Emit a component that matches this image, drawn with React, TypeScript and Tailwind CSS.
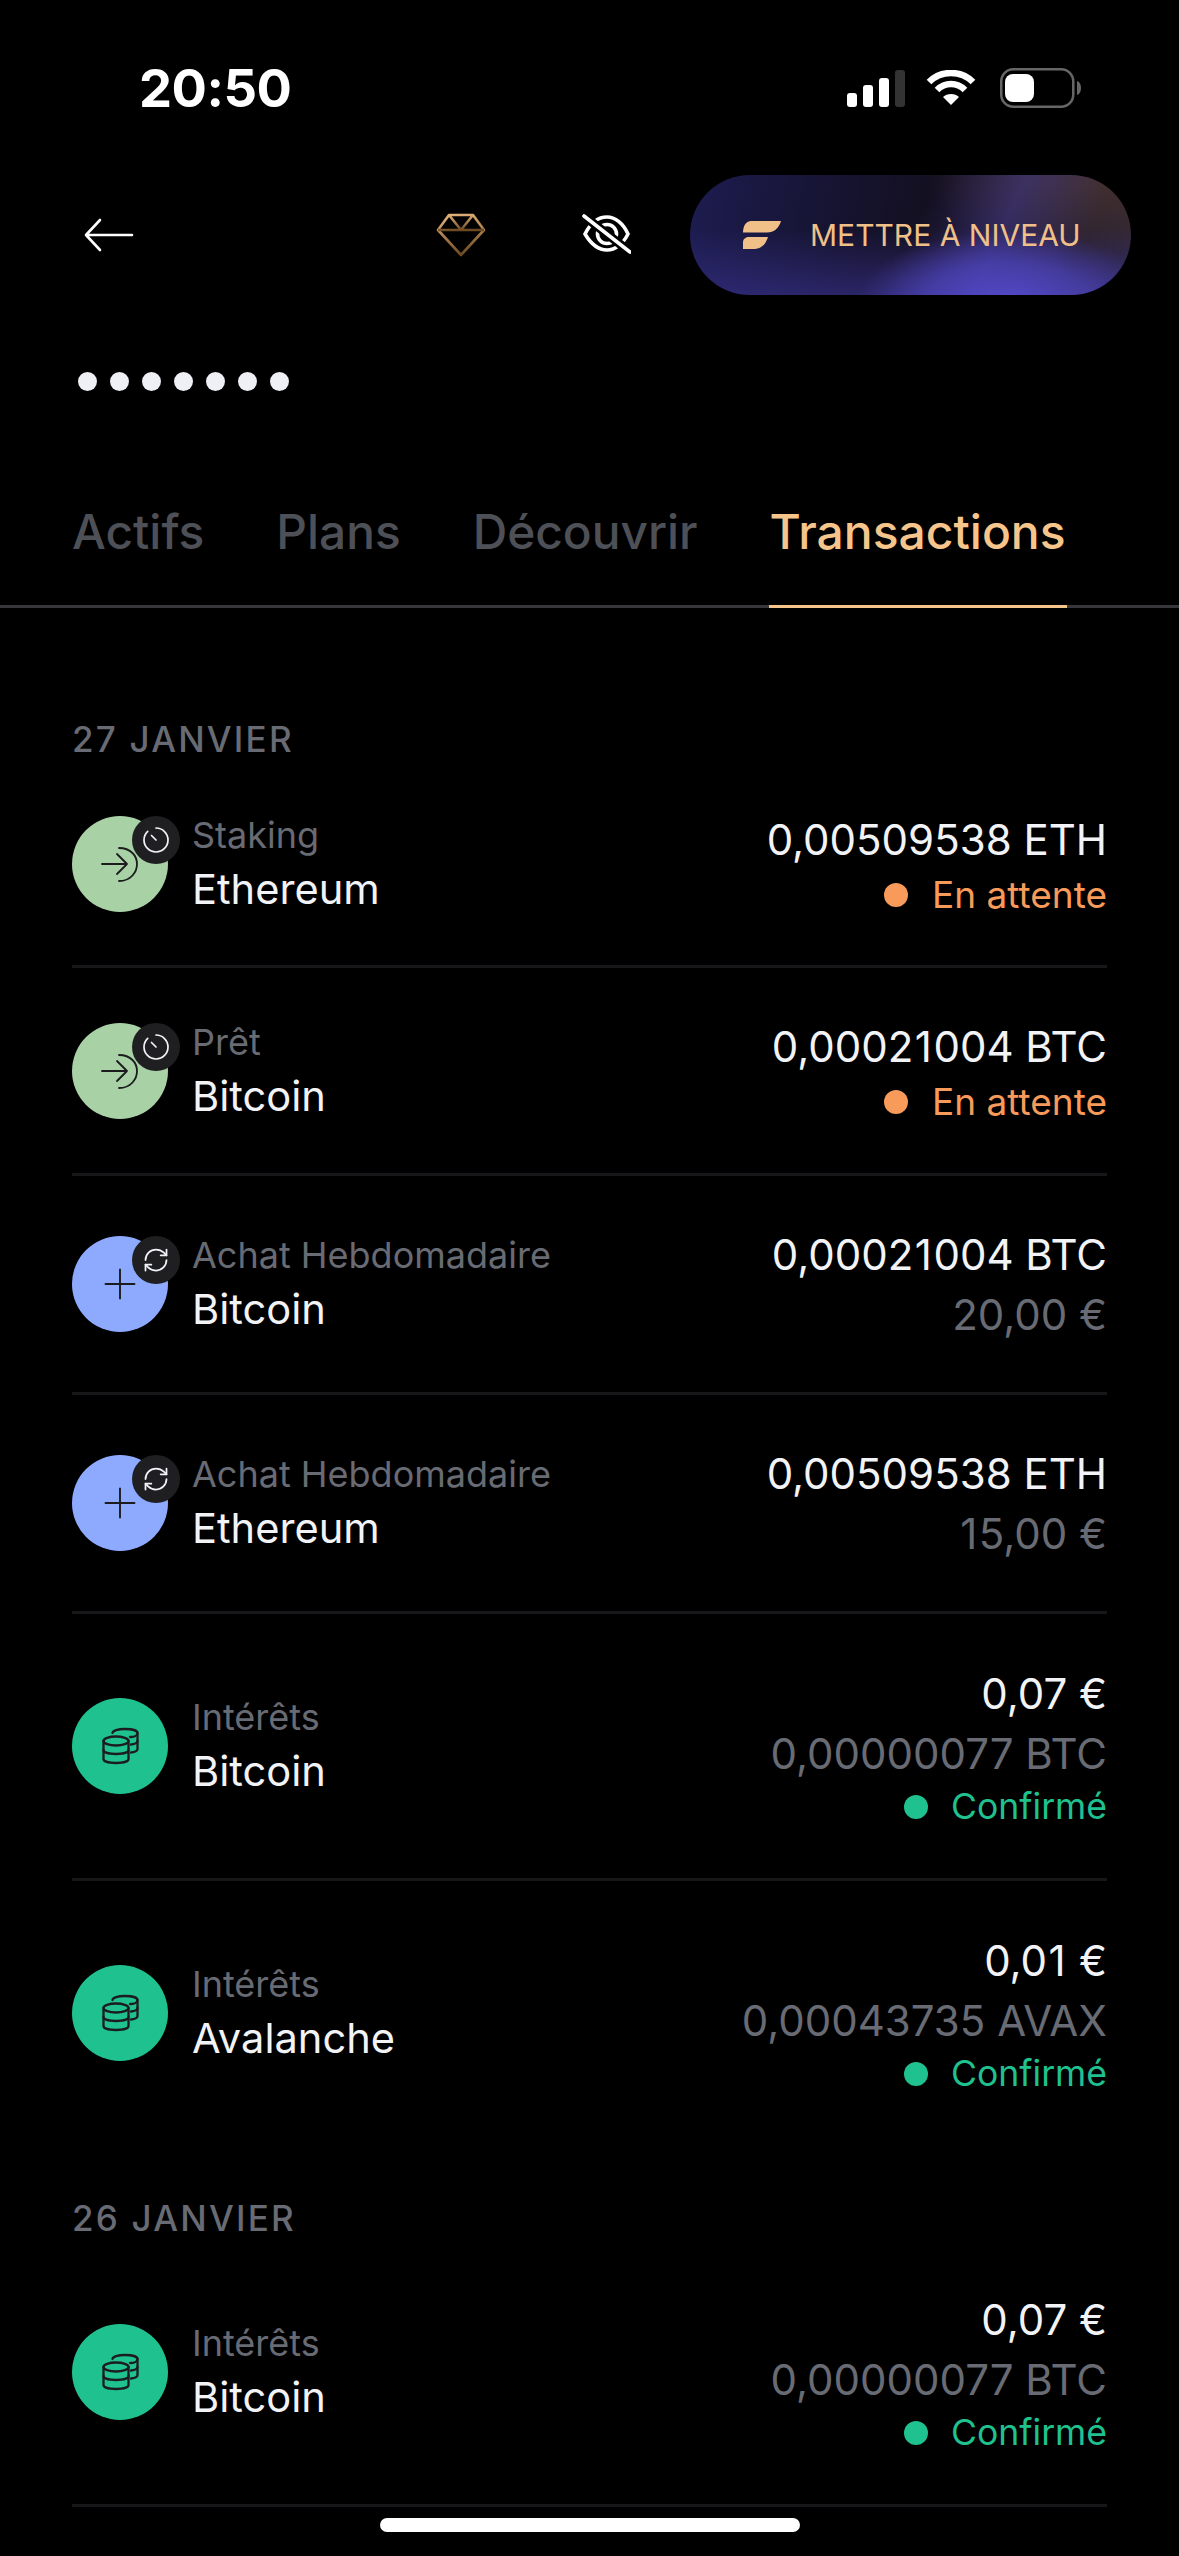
import React from "react";
import { RefreshCw } from "lucide-react";

type Tx = {
  kind: "in" | "plus" | "coin";
  label: string;
  name: string;
  amount: string;
  sub?: string;
  status?: "wait" | "ok";
  rowClass: string;
  noLine?: boolean;
};

const group1: Tx[] = [
  { kind: "in", label: "Staking", name: "Ethereum", amount: "0,00509538 ETH", status: "wait", rowClass: "h-[207px] pt-[2px]" },
  { kind: "in", label: "Prêt", name: "Bitcoin", amount: "0,00021004 BTC", status: "wait", rowClass: "h-[208px]" },
  { kind: "plus", label: "Achat Hebdomadaire", name: "Bitcoin", amount: "0,00021004 BTC", sub: "20,00 €", rowClass: "h-[219px]" },
  { kind: "plus", label: "Achat Hebdomadaire", name: "Ethereum", amount: "0,00509538 ETH", sub: "15,00 €", rowClass: "h-[219px]" },
  { kind: "coin", label: "Intérêts", name: "Bitcoin", amount: "0,07 €", sub: "0,00000077 BTC", status: "ok", rowClass: "h-[267px]" },
  { kind: "coin", label: "Intérêts", name: "Avalanche", amount: "0,01 €", sub: "0,00043735 AVAX", status: "ok", rowClass: "h-[267px] pb-[3px]", noLine: true },
];

// the 1 is wider in the reference than in plain Inter
const Num = ({ text }: { text: string }) => (
  <>
    {text.split(/(1)/).map((p, i) =>
      p === "1" ? (
        <span key={i} className="px-[1.5px]">
          1
        </span>
      ) : (
        p
      )
    )}
  </>
);

const CircleIcon = ({ kind }: { kind: Tx["kind"] }) => {
  const bg = kind === "in" ? "bg-[#a8d1a6]" : kind === "plus" ? "bg-[#8eaaff]" : "bg-[#1fc18f]";
  return (
    <div className={`relative w-[96px] h-[96px] rounded-full shrink-0 ${bg}`}>
      <svg viewBox="0 0 96 96" className="w-[96px] h-[96px]" fill="none" stroke="#1c1c1e" strokeLinecap="round" strokeLinejoin="round">
        {kind === "in" && (
          <g strokeWidth="1.8">
            <path d="M30 48H55M45 38L55 48L45 58" />
            <path d="M47 32C59 32 65 40 65 48C65 56 59 65 47 65" />
          </g>
        )}
        {kind === "plus" && <path d="M33.5 48H62.5M48 33.5V62.5" strokeWidth="1.9" />}
        {kind === "coin" && (
          <g strokeWidth="2.3" transform="translate(30 30)">
            <ellipse cx="14" cy="13" rx="12.5" ry="4.5" />
            <path d="M1.5 13V31C1.5 33.5 7 35 14 35C21 35 26.5 33.5 26.5 31V13" />
            <path d="M1.5 22C1.5 24.5 7 26 14 26C21 26 26.5 24.5 26.5 22" />
            <path d="M10.5 5C10.5 2.5 16 1 23 1C30 1 35.5 2.5 35.5 5C35.5 7.5 32 9 28 9" />
            <path d="M35.5 5V21C35.5 23 33 24 29 24.5" />
            <path d="M35.5 13C35.5 15 33 16 29 16.5" />
          </g>
        )}
      </svg>
      {kind === "in" && (
        <div className="absolute top-0 left-[60px] w-[48px] h-[48px] rounded-full bg-[#1f1f21] flex items-center justify-center">
          <svg viewBox="0 0 48 48" className="w-[48px] h-[48px]" fill="none" stroke="#f2f3f7" strokeWidth="1.7" strokeLinecap="round">
            <path d="M24 12C30.6 12 36 17.4 36 24C36 30.6 30.6 36 24 36C17.4 36 12 30.6 12 24C12 20.6 13.4 17.6 15.7 15.4" />
            <path d="M24 24L19.5 19.5" />
          </svg>
        </div>
      )}
      {kind === "plus" && (
        <div className="absolute top-0 left-[60px] w-[48px] h-[48px] rounded-full bg-[#1f1f21] flex items-center justify-center">
          <RefreshCw size={28} strokeWidth={1.5} color="#f2f3f7" />
        </div>
      )}
    </div>
  );
};

const Row = ({ tx }: { tx: Tx }) => (
  <div className={`flex items-center justify-between ${tx.rowClass} ${tx.noLine ? "" : "border-b-[3px] border-[#17171a]"}`}>
    <div className="flex items-center gap-[24px]">
      <CircleIcon kind={tx.kind} />
      <div className="flex flex-col pb-[4px]">
        <p className="text-[36px] leading-[54px] text-[#686b73]">{tx.label}</p>
        <p className="text-[41.6px] leading-[54px] text-[#f2f3f7]">{tx.name}</p>
      </div>
    </div>
    <div className="flex flex-col items-end pt-[2px]">
      <p className="text-[42px] leading-[60px] text-[#f2f3f7]">
        <Num text={tx.amount} />
      </p>
      {tx.sub && (
        <p className="text-[42px] leading-[60px] text-[#686b73]">
          <Num text={tx.sub} />
        </p>
      )}
      {tx.status === "wait" && (
        <div className="flex items-center gap-[24px] h-[50px]">
          <span className="w-[24px] h-[24px] rounded-full bg-[#f79a5a]" />
          <span className="text-[37px] text-[#f79a5a]">En attente</span>
        </div>
      )}
      {tx.status === "ok" && (
        <div className="flex items-center gap-[23px] h-[46px]">
          <span className="w-[24px] h-[24px] rounded-full bg-[#1fc18f]" />
          <span className="text-[35.6px] text-[#1fc18f]">Confirmé</span>
        </div>
      )}
    </div>
  </div>
);

const StatusIcons = () => (
  <div className="flex items-center gap-[21px]">
    <svg width="58" height="38" viewBox="0 0 58 38">
      <rect x="0" y="24" width="10" height="14" rx="3" fill="#fff" />
      <rect x="16" y="16" width="10" height="22" rx="3" fill="#fff" />
      <rect x="32" y="9" width="10" height="29" rx="3" fill="#fff" />
      <rect x="48" y="1" width="10" height="37" rx="3" fill="#333" />
    </svg>
    <svg width="50" height="36" viewBox="0 0 50 36" fill="none" stroke="#fff" strokeWidth="6.5">
      <path d="M3 12C15 0 35 0 47 12" />
      <path d="M11 20C19 12 31 12 39 20" />
      <path d="M25 35L17 27C21 23 29 23 33 27Z" fill="#fff" stroke="none" />
    </svg>
    <svg width="84" height="40" viewBox="0 0 84 40" fill="none">
      <rect x="4.25" y="1.25" width="72" height="37.5" rx="12" stroke="#666" strokeWidth="2.5" />
      <rect x="8" y="6" width="29" height="28" rx="8" fill="#fff" />
      <path d="M80 13C83 14 84 17 84 20C84 23 83 26 80 27Z" fill="#666" />
    </svg>
  </div>
);

const tabs = ["Actifs", "Plans", "Découvrir"];

const App = () => {
  return (
    <div className="relative w-[1179px] h-[2556px] overflow-hidden bg-black font-['Inter',sans-serif]">
      <div className="flex items-center justify-between h-[50px] mt-[63px] pl-[139px] pr-[98px]">
        <span className="text-[52.5px] font-bold text-white font-['Inter',sans-serif] tracking-[-0.5px]">20:50</span>
        <StatusIcons />
      </div>

      <div className="flex items-center mt-[62px] pl-[84px] pr-[48px] h-[120px]">
        <svg width="50" height="36" viewBox="0 0 50 36" fill="none" stroke="#fff" strokeWidth="2.6" strokeLinecap="round" strokeLinejoin="round">
          <path d="M48 18H2M16 3L2 18L16 33" />
        </svg>
        <svg className="ml-[302px]" width="50" height="44" viewBox="0 0 50 44" fill="none" stroke="url(#gold)" strokeWidth="2.6" strokeLinejoin="round">
          <defs>
            <linearGradient id="gold" x1="0.3" y1="0" x2="0.5" y2="1">
              <stop offset="0" stopColor="#e0b078" />
              <stop offset="1" stopColor="#6e4a22" />
            </linearGradient>
          </defs>
          <path d="M13 2H37L48 17L25 42L2 17Z" />
          <path d="M2 17H48M13 2L25 17L37 2" />
        </svg>
        <svg className="ml-[95px]" width="50" height="44" viewBox="0 0 50 44" fill="none" stroke="#fff" strokeWidth="3.6" strokeLinecap="round">
          <path d="M4 21C10 9 18 4 26 4C34 4 42 10 47 21C42 31 34 37 26 37C18 37 10 31 4 21Z" />
          <circle cx="26" cy="21" r="9.5" />
          <path d="M3 3L49 39" stroke="#000" strokeWidth="9" />
          <path d="M3 3L49 39" />
        </svg>
        <button className="ml-[59px] flex items-center gap-[29px] w-[441px] h-[120px] pl-[53px] rounded-[60px] bg-[radial-gradient(ellipse_150px_70px_at_72%_105%,#5248c6_0%,rgba(82,72,198,0.6)_55%,transparent_100%),linear-gradient(115deg,transparent_50%,rgba(82,72,198,0.35)_68%,transparent_86%),linear-gradient(0deg,rgba(60,52,150,0.55)_0%,transparent_55%),radial-gradient(ellipse_180px_90px_at_95%_0%,#43302c_0%,transparent_100%),linear-gradient(100deg,#1d1c50_0%,#15132e_35%,#141020_55%,#2c2438_100%)]">
          <svg width="38" height="28" viewBox="0 0 38 28" fill="#f0c088">
            <path d="M8 0H38C36 7 31 11.5 24 11.5H0C0 5 3 0 8 0Z" />
            <path d="M6 16H25C23 23 18 28 12 28H0V21C0 18 3 16 6 16Z" />
          </svg>
          <span className="text-[30px] text-[#f0c088] whitespace-nowrap">METTRE À NIVEAU</span>
        </button>
      </div>

      <div className="flex items-center gap-[13px] mt-[76px] pl-[78px] h-[20px]">
        {[0, 1, 2, 3, 4, 5, 6].map((i) => (
          <span key={i} className="w-[19px] h-[19px] rounded-full bg-[#eef0f6]" />
        ))}
      </div>

      <div className="flex mt-[90px] pl-[72px] h-[127px] border-b-[3px] border-[#37373b] gap-[72px]">
        {tabs.map((t) => (
          <span key={t} className="text-[47.8px] leading-[60px] pt-[21px] font-medium text-[#4e5057]">{t}</span>
        ))}
        <span className="-ml-[1px] text-[48px] leading-[60px] pt-[21px] h-[127px] px-px font-medium text-[#f5c58b] border-b-[3px] border-[#f5c58b] shrink-0">Transactions</span>
      </div>

      <div className="px-[72px]">
        <p className="mt-[109px] text-[35px] leading-[44px] tracking-[2.2px] font-medium text-[#686b73]">27 JANVIER</p>
        <div>
          {group1.map((tx, i) => (
            <Row key={i} tx={tx} />
          ))}
        </div>
        <p className="mt-[48px] text-[35px] leading-[44px] tracking-[2.2px] font-medium text-[#686b73]">26 JANVIER</p>
        <Row tx={{ kind: "coin", label: "Intérêts", name: "Bitcoin", amount: "0,07 €", sub: "0,00000077 BTC", status: "ok", rowClass: "h-[267px]" }} />
      </div>

      <div className="absolute left-[380px] bottom-[24px] w-[420px] h-[14px] rounded-full bg-white" />
    </div>
  );
};

export default App;
